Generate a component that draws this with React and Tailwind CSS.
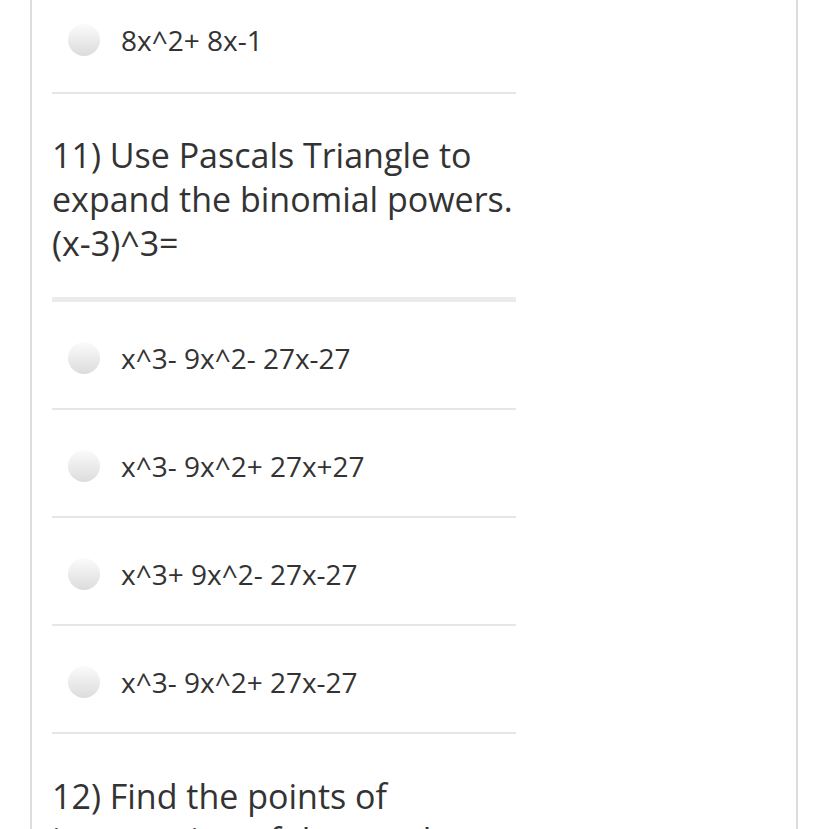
import React from "react";

const Radio = () => (
  <span className="block w-[32px] h-[32px] rounded-full bg-gradient-to-b from-[#fbfbfb] to-[#dcdcdc] shrink-0" />
);

const Option = ({ text, first }) => (
  <div
    className={
      first
        ? "flex items-center h-[94px] pb-[12px] pl-4 gap-[21px] border-b-2 border-[#e6e6e6]"
        : "flex items-center h-[108px] pt-[6px] pl-4 gap-[21px] border-b-2 border-[#e6e6e6]"
    }
  >
    <Radio />
    <span className="text-[28px] text-[#333]">{text}</span>
  </div>
);

const App = () => {
  const options = [
    "x^3- 9x^2- 27x-27",
    "x^3- 9x^2+ 27x+27",
    "x^3+ 9x^2- 27x-27",
    "x^3- 9x^2+ 27x-27",
  ];

  return (
    <div
      className="bg-white w-[828px] h-[829px] overflow-hidden"
      style={{ fontFamily: '"Open Sans", sans-serif' }}
    >
      <div className="mx-[30px] w-[768px] h-full border-x-2 border-[#dddddd] pl-[20px]">
        <div className="w-[464px]">
          <Option text="8x^2+ 8x-1" first />
          <div className="pt-[39px] pb-[32px] text-[34px] leading-[44px] text-[#333]">
            11) Use Pascals Triangle to expand the binomial powers. (x-3)^3=
          </div>
          <div className="h-[5px] bg-[#ebebeb]" />
          {options.map((o) => (
            <Option key={o} text={o} />
          ))}
          <div className="pt-[40px] text-[34px] leading-[44px] text-[#333]">
            12) Find the points of intersection of the graphs below
          </div>
        </div>
      </div>
    </div>
  );
};

export default App;
